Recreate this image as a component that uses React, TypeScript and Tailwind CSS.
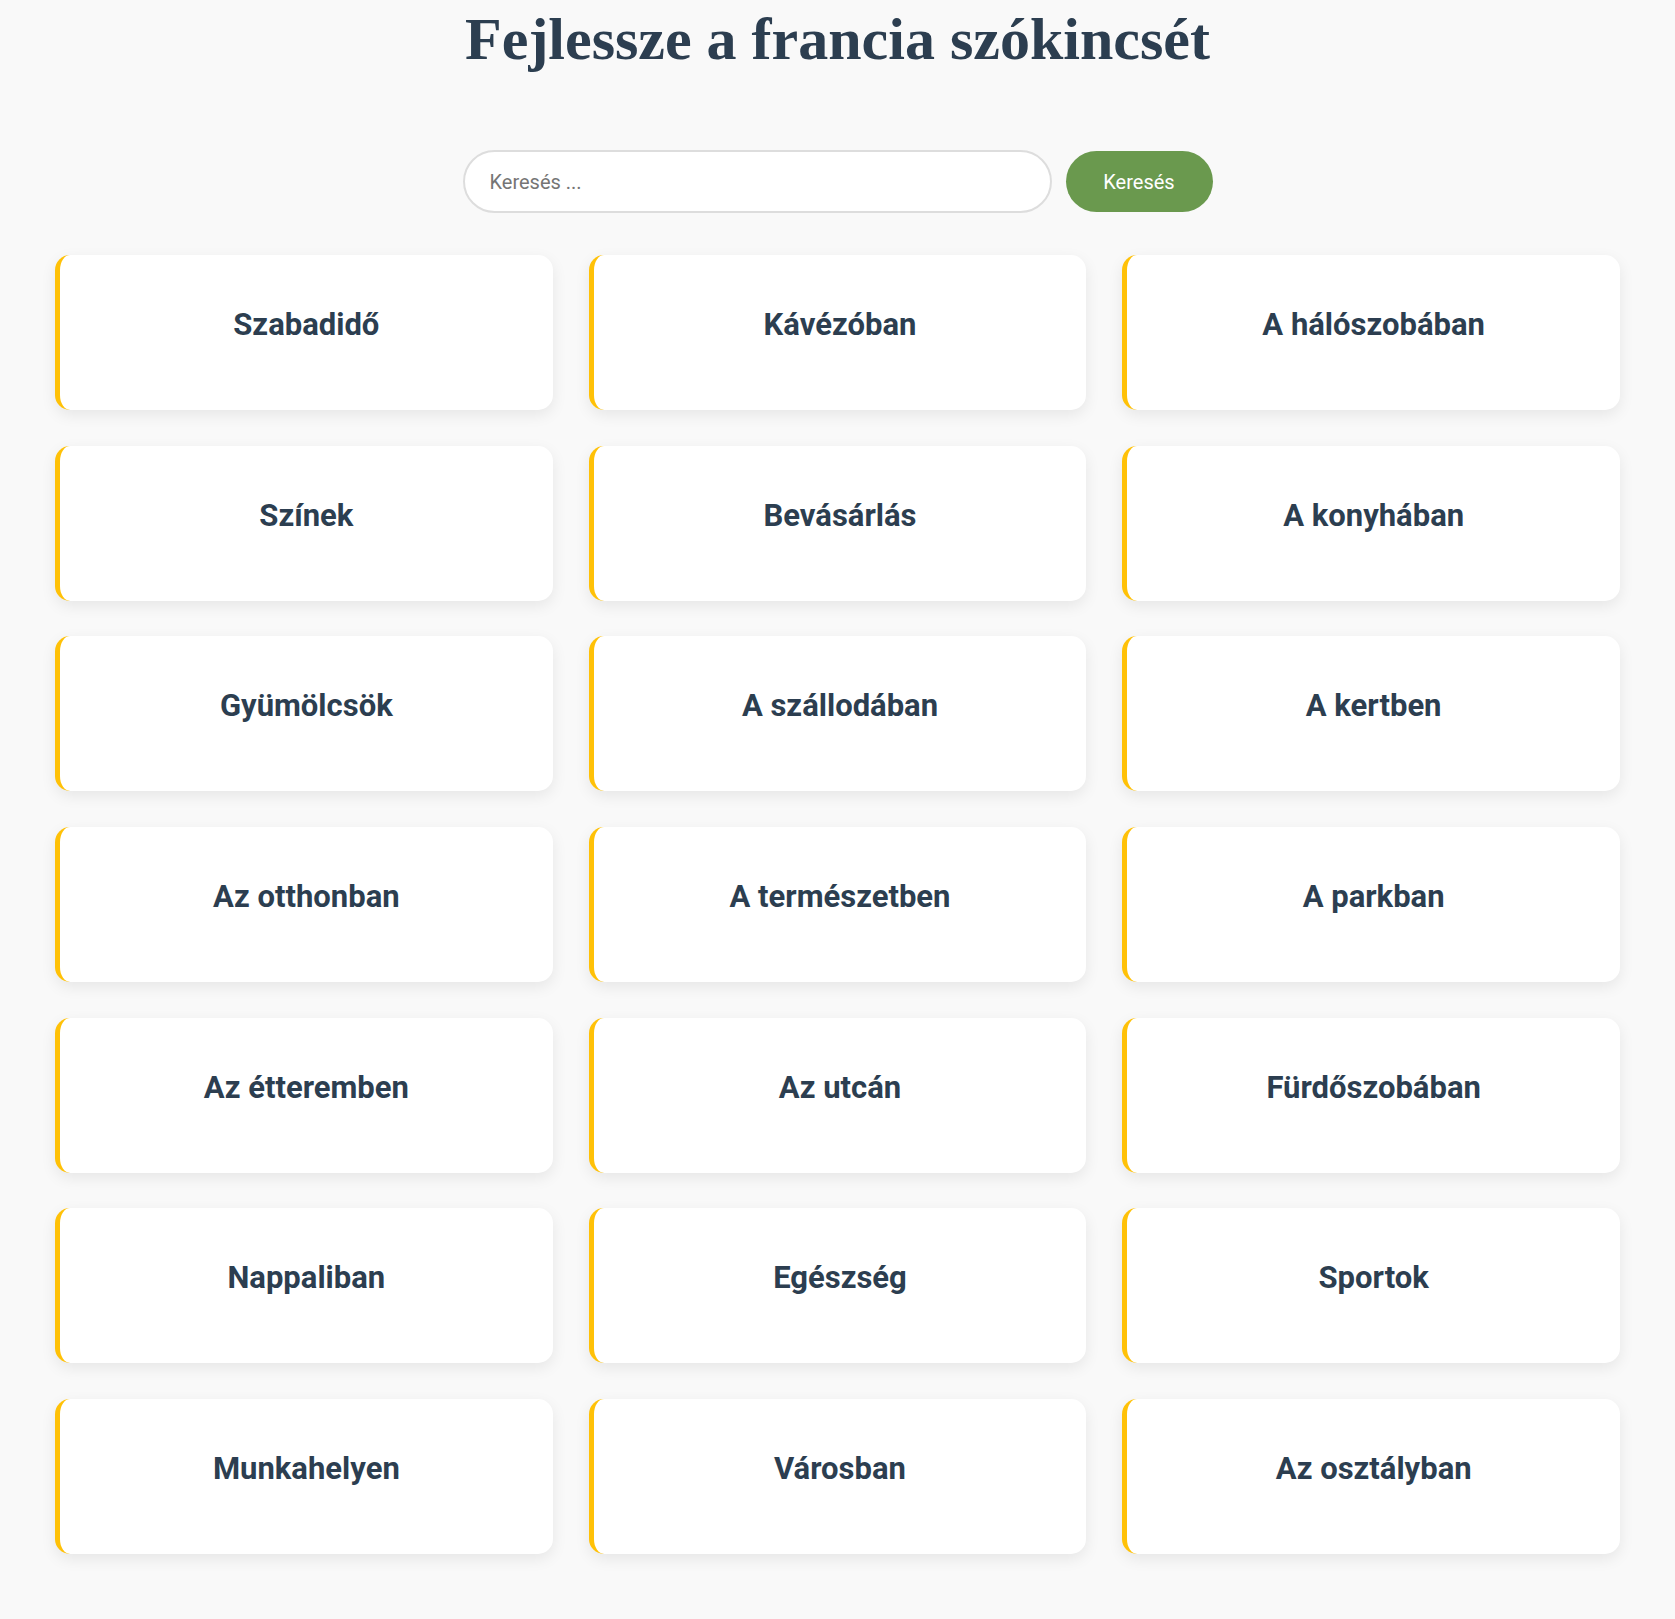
const TOPICS = [
  'Szabadidő', 'Kávézóban', 'A hálószobában',
  'Színek', 'Bevásárlás', 'A konyhában',
  'Gyümölcsök', 'A szállodában', 'A kertben',
  'Az otthonban', 'A természetben', 'A parkban',
  'Az étteremben', 'Az utcán', 'Fürdőszobában',
  'Nappaliban', 'Egészség', 'Sportok',
  'Munkahelyen', 'Városban', 'Az osztályban',
]

function TopicCard({ title }: { title: string }) {
  return (
    <a
      href="#"
      className="flex h-[155px] items-center justify-center rounded-[15px] border-l-[5px] border-[#ffc107] bg-white pb-[16px] shadow-[0_5px_15px_rgba(0,0,0,0.08)]"
    >
      <h2 className="text-[31px] font-bold leading-[1.2] text-[#2c3e50]" style={{ fontFamily: 'Roboto, "Noto Sans", sans-serif' }}>
        {title}
      </h2>
    </a>
  )
}

export default function App() {
  return (
    <div className="min-h-[1619px] bg-[#f9f9f9] px-[55px] pt-[3px] pb-[66px]" style={{ fontFamily: 'Roboto, "Noto Sans", sans-serif' }}>
      <h1
        className="text-center text-[60px] font-bold leading-[1.2] text-[#2c3e50]"
        style={{ fontFamily: '"Liberation Serif", "Times New Roman", serif' }}
      >
        Fejlessze a francia szókincsét
      </h1>

      {/* Search */}
      <form className="mt-[75px] flex items-center justify-center gap-[14px]" onSubmit={(e) => e.preventDefault()}>
        <input
          type="text"
          placeholder="Keresés ..."
          className="h-[63px] w-[589px] rounded-full border-2 border-[#dddddd] bg-white px-[25px] text-[20px] text-[#333] outline-none placeholder:text-[#757575]"
        />
        <button
          type="submit"
          className="h-[61px] w-[147px] rounded-full bg-[#6a994e] text-[20px] text-white"
        >
          Keresés
        </button>
      </form>

      {/* Topics */}
      <div className="mt-[42px] grid grid-cols-3 gap-x-[36px] gap-y-[35.7px]">
        {TOPICS.map((t) => (
          <TopicCard key={t} title={t} />
        ))}
      </div>
    </div>
  )
}
